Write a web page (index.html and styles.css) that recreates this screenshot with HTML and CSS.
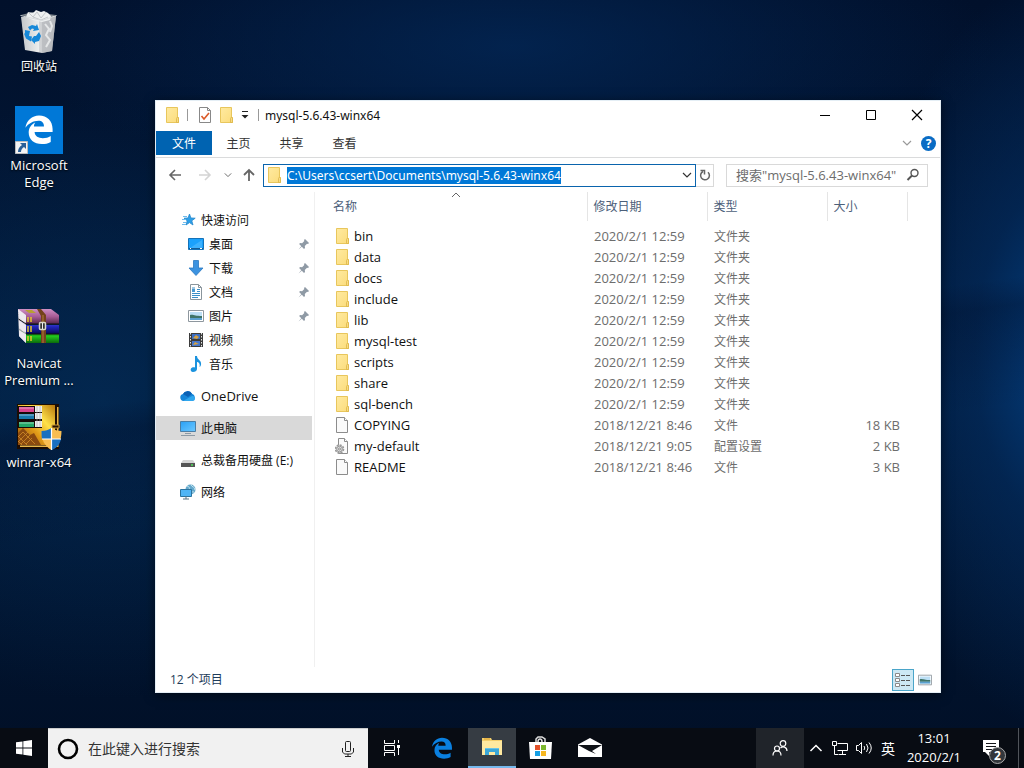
FILE: index.html
```html
<!DOCTYPE html>
<html lang="zh-CN">
<head>
<meta charset="utf-8">
<title>mysql-5.6.43-winx64</title>
<link rel="stylesheet" href="styles.css">
</head>
<body>
<svg class="defs" aria-hidden="true">
  <defs>
    <linearGradient id="g-folder" x1="0" y1="0" x2="1" y2="1"><stop offset="0" stop-color="#ffeaa0"/><stop offset="1" stop-color="#fbdc7c"/></linearGradient>
    <linearGradient id="g-screen" x1="0" y1="0" x2="1" y2="1"><stop offset="0" stop-color="#2aa0f5"/><stop offset="1" stop-color="#6cc8ff"/></linearGradient>
    <linearGradient id="g-gold" x1="0" y1="1" x2="1" y2="0"><stop offset="0" stop-color="#8a4a0c"/><stop offset=".4" stop-color="#e09a18"/><stop offset=".65" stop-color="#ffe24a"/><stop offset="1" stop-color="#b8780c"/></linearGradient>
    <linearGradient id="g-bin" x1="0" x2="1"><stop offset="0" stop-color="#c3c6c9"/><stop offset=".5" stop-color="#eceded"/><stop offset=".52" stop-color="#d4d6d8"/><stop offset="1" stop-color="#a9adb1"/></linearGradient>
    <linearGradient id="b-pink" x1="0" y1="0" x2="0" y2="1"><stop offset="0" stop-color="#cf8fc4"/><stop offset=".5" stop-color="#a85c96"/><stop offset="1" stop-color="#54254a"/></linearGradient>
    <linearGradient id="b-blue" x1="0" y1="0" x2="0" y2="1"><stop offset="0" stop-color="#5a62e8"/><stop offset=".5" stop-color="#2024b8"/><stop offset="1" stop-color="#0a0a50"/></linearGradient>
    <linearGradient id="b-green" x1="0" y1="0" x2="0" y2="1"><stop offset="0" stop-color="#0c5a0a"/><stop offset=".5" stop-color="#22c41c"/><stop offset="1" stop-color="#0c6a0c"/></linearGradient>
  </defs>
  <symbol id="folder" viewBox="0 0 16 16"><path d="M1.5.5h11v10h1v5h-12z" fill="url(#g-folder)" stroke="#e8c65c"/><path d="M11.5 15.5v-4l1-1.500 1 1v4.500z" fill="#f9dc83" stroke="#dcb548" stroke-width=".8"/></symbol>
  <symbol id="file" viewBox="0 0 16 16"><path d="M1.500.500h8l3 3v12h-11z" fill="#fafafa" stroke="#8c8c8c"/><path d="M9.500.500v3h3" fill="#fff" stroke="#8c8c8c"/></symbol>
  <symbol id="config" viewBox="0 0 16 16"><path d="M3.500.500h6l3 3v12h-9z" fill="#fafafa" stroke="#8c8c8c"/><path d="M9.500.500v3h3" fill="#fff" stroke="#8c8c8c"/><circle cx="4.500" cy="11" r="4" fill="#ddd" stroke="#999" stroke-width="1.600" stroke-dasharray="2 1.100"/><circle cx="4.500" cy="11" r="2.800" fill="#e0e0e0" stroke="#999"/><circle cx="4.500" cy="11" r="1" fill="#fff" stroke="#888"/></symbol>
  <symbol id="pin" viewBox="0 0 12 12"><path d="M7 1l4 4-1 1-1-.300-2.200 2.200.200 2-1 1L3.800 8.700.500 11.500l2.800-3.300L1.100 6l1-1 2 .200L6.300 3 6 2z" fill="#8f9aa5"/></symbol>
  <symbol id="edge" viewBox="0 0 32 32"><path d="M1.500 14.200C2.600 6.300 8.600 1 16 1c8.800 0 14.500 6 14.500 14.500v3.200H11.300c.2 4.700 4.200 6.500 8.700 6.500 3.300 0 6-.9 8.500-2.400v6.400C25.700 30.800 22.500 31.500 19 31.500 10.800 31.500 5 27 5 19.300c0-4.900 2.800-8.900 7-10.800-.9 1.200-1.300 2.700-1.400 4.200h10.700c0-3.900-2.200-6-5.900-6-5.500 0-10.600 2.900-13.900 7.500z" fill="currentColor"/></symbol>
  <symbol id="chev" viewBox="0 0 10 10"><path d="M1 3l4 4 4-4" fill="none" stroke="currentColor" stroke-width="1.200"/></symbol>
  <symbol id="picture" viewBox="0 0 16 16"><path d="M.500 2.500h15v11H.500z" fill="#fff" stroke="#8e979e"/><path d="M2 4h12v8H2z" fill="#bcdff5"/><path d="M2 7c3-1 5 1 12 1v2H2z" fill="#3f7468"/><path d="M2 10h12v2H2z" fill="#5aa0cf"/></symbol>
</svg>

<main class="desktop">
  <nav class="shortcuts" aria-label="桌面图标">
    <button class="shortcut">
      <svg class="shortcut-icon" viewBox="0 0 48 48">
        <path d="M6 10L41 9 37 44l-10 2L10 43z" fill="url(#g-bin)"/><path d="M27 14l14-5-4 35-10 2z" fill="#b9bcbf" opacity=".8"/>
        <path d="M6 8l12-3 23 3-13 5z" fill="#7d858c"/><path d="M11 10l2-5 5 1 3-3 5 2 3-1 4 2 3 3-1 4-8 2-9-2z" fill="#eef0f1"/><path d="M13 5l5 5 4-5 4 6 5-6M18 10l8 3 7-3" fill="none" stroke="#c3c7ca"/>
        <path d="M5.500 8.500L27 13.500l14.500-5" fill="none" stroke="#d8dbdd"/><path d="M30 17l4 5-3 6 4 5-4 7M35 14l2 5-2 6" fill="none" stroke="#e5e7e8" stroke-width="2"/>
        <g fill="#1688d8"><path d="M13 20l4-2 4 1 1-2 2 6-6 1 1-2-2-.500-2 2z"/><path d="M10 23l5 1-1 5 3 .500-1 5-5-3-2-5 1 0z"/><path d="M18 29l3 0 3-4 2 4-2 5-4 1v2l-4-4 3-4z"/></g>
      </svg>
      <span class="shortcut-label zh">回收站</span>
    </button>
    <button class="shortcut">
      <svg class="shortcut-icon" viewBox="0 0 48 48"><path d="M0 0h48v48H0z" fill="#0078d7"/><svg x="9" y="7" width="30" height="33" color="#fff"><use href="#edge"/></svg><path d="M.500 35.500h12v12H.500z" fill="#f4f4f4" stroke="#bbb"/><path d="M5 37h6v6L9 41c-2 1-3 3-3 5H3c0-3 1-5 4-7z" fill="#2a6098"/></svg>
      <span class="shortcut-label">Microsoft Edge</span>
    </button>
    <button class="shortcut shortcut-archive">
      <svg class="shortcut-icon" viewBox="0 0 48 48">
        <path d="M3 5l8 6v28l-7-7z" fill="#e8e4e6"/><path d="M3 8l8 5M3 10l8 5M3 16l8 6M4 19l7 5M4 25l7 5M4 28l7 5" stroke="#8c8894" stroke-width=".800"/>
        <path d="M3 5h33l8 6v9H11l-4-9z" fill="url(#b-pink)"/><path d="M4 16l7 5h33v9H11z" fill="url(#b-blue)"/><path d="M4 26l7 4h33v9H11z" fill="url(#b-green)"/>
        <path d="M3 5l8 6v8l-7-6zM4 16l7 5v8l-7-6zM4 26l7 4v9l-7-7z" fill="#eee9ef"/><path d="M11 20h33M11 30h33M3.500 15l7.500 5" stroke="#111" fill="none"/>
        <path d="M13 13v5M16 13v5M13 22v6M16 22v6M13 32v5M16 32v5" stroke="#e6c72c" stroke-width="1.500"/><path d="M10 6h7l4 3h-7z" fill="#b8a032"/>
        <path d="M22 5h4l5 6v28h-5V12z" fill="#74421c"/><path d="M28 11v28" stroke="#b57a3c"/><rect x="24.500" y="18.500" width="6" height="7" rx="1" fill="#333" stroke="#d8d8c8" stroke-width="1.500"/><path d="M27.500 19v6" stroke="#eee"/>
      </svg>
      <span class="shortcut-label">Navicat Premium ...</span>
    </button>
    <button class="shortcut shortcut-installer">
      <svg class="shortcut-icon" viewBox="0 0 48 48">
        <path d="M2 1h42v45H2z" fill="#1d0d02"/><path d="M42 4h1.500v40H5v-1.500h37z" fill="#e9b64a"/><path d="M3 2h37v40H3z" fill="url(#g-gold)"/>
        <path d="M3 30l5-5 7 7 4-2 7 12H3z" fill="#8a4a10"/><path d="M3 33l9 9M3 38l4 4M8 29l12 12M3 34l5-5M3 39l10-10M6 41l9-9M11 41l6-6" stroke="#d18b28" stroke-width=".800"/>
        <path d="M3 3h24v22H3z" fill="#160b08"/><path d="M4 4h15v5H4z" fill="#d8428c"/><path d="M4 11h15v5H4z" fill="#1878ac"/><path d="M4 19h15v5H4z" fill="#22a868"/><path d="M4 5h15M4 12h15M4 20h15" stroke="#fff" opacity=".5"/>
        <path d="M20 3h7v6h-7zM20 10h7v6h-7zM20 18h7v6h-7z" fill="#eee"/><path d="M22 3v21M25 3v21" stroke="#aaa" stroke-width=".600"/><path d="M37 22h7v3h-7z" fill="#241202" stroke="#c99a38"/>
        <path d="M36.500 25c3 2 6 3 10 3 0 9-3 15-10 19-7-4-10-10-10-19 4 0 7-1 10-3z" fill="#f8bd52"/><path d="M36.500 25v11H27c-.5-3-.5-5-.5-8 4 0 7-1 10-3zM36.500 36H46c-1 5-4 9-9.500 11z" fill="#1a70c0"/><path d="M36.500 25v22M27 36h19" stroke="#fff" stroke-width="1.200"/>
      </svg>
      <span class="shortcut-label">winrar-x64</span>
    </button>
  </nav>

  <section class="window" aria-label="mysql-5.6.43-winx64">
    <header class="titlebar">
      <svg class="i16"><use href="#folder"/></svg>
      <span class="tick"></span>
      <button class="quick" aria-label="属性"><svg class="i16" viewBox="0 0 16 16"><path d="M2.500.500h8l3 3v12h-11z" fill="#fff" stroke="#888"/><path d="M10.500.500v3h3" fill="none" stroke="#888"/><path d="M4.500 9l2.500 3 5-6" fill="none" stroke="#dc5a28" stroke-width="1.600"/></svg></button>
      <button class="quick" aria-label="新建文件夹"><svg class="i16"><use href="#folder"/></svg></button>
      <button class="quick quick-more" aria-label="自定义"><svg viewBox="0 0 8 8" width="8" height="8"><path d="M1 .500h6" stroke="#222"/><path d="M.500 4h7L4 7.500z" fill="#222"/></svg></button>
      <span class="tick"></span>
      <h1 class="title">mysql-5.6.43-winx64</h1>
      <div class="controls">
        <button class="control" aria-label="最小化"><svg viewBox="0 0 12 12" width="12" height="12"><path d="M1 6.500h10" stroke="#000"/></svg></button>
        <button class="control" aria-label="最大化"><svg viewBox="0 0 12 12" width="12" height="12"><path d="M1.500 1.500h9v9h-9z" fill="none" stroke="#000"/></svg></button>
        <button class="control" aria-label="关闭"><svg viewBox="0 0 12 12" width="12" height="12"><path d="M1 1l10 10M11 1L1 11" stroke="#000" stroke-width="1.200"/></svg></button>
      </div>
    </header>

    <div class="tabs zh">
      <button class="tab tab-file">文件</button><button class="tab">主页</button><button class="tab">共享</button><button class="tab">查看</button>
      <div class="tabs-end">
        <button class="quick muted" aria-label="展开功能区"><svg width="10" height="10"><use href="#chev"/></svg></button>
        <button class="help" aria-label="帮助">?</button>
      </div>
    </div>

    <div class="toolbar">
      <button class="nav-btn" aria-label="后退"><svg class="i14" viewBox="0 0 14 14"><path d="M13 7H2M7 2L2 7l5 5" fill="none" stroke="#666" stroke-width="1.600"/></svg></button>
      <button class="nav-btn" aria-label="前进"><svg class="i14" viewBox="0 0 14 14"><path d="M1 7h11M7 2l5 5-5 5" fill="none" stroke="#d4d4d4" stroke-width="1.600"/></svg></button>
      <button class="nav-btn nav-small" aria-label="最近位置"><svg width="8" height="8" color="#666"><use href="#chev"/></svg></button>
      <button class="nav-btn nav-up" aria-label="向上"><svg class="i14" viewBox="0 0 14 14"><path d="M7 13V2M2 7l5-5 5 5" fill="none" stroke="#666" stroke-width="1.800"/></svg></button>
      <div class="address">
        <svg class="i16"><use href="#folder"/></svg>
        <input class="path" type="text" size="36" value="C:\Users\ccsert\Documents\mysql-5.6.43-winx64" aria-label="地址">
        <button class="address-drop" aria-label="以前的位置"><svg width="10" height="10"><use href="#chev"/></svg></button>
      </div>
      <button class="refresh" aria-label="刷新"><svg viewBox="0 0 12 12" width="12" height="12"><path d="M4 2.500A4.400 4.400 0 1 0 9 3.200" fill="none" stroke="#666" stroke-width="1.500"/><path d="M1.500 1.500h4v4" fill="none" stroke="#666" stroke-width="1.500"/></svg></button>
      <label class="search">
        <input type="text" placeholder="搜索&quot;mysql-5.6.43-winx64&quot;" aria-label="搜索">
        <svg viewBox="0 0 14 14" width="14" height="14"><circle cx="8.500" cy="5" r="3.500" fill="none" stroke="#555" stroke-width="1.400"/><path d="M6 7.500L1.500 12" stroke="#555" stroke-width="2"/></svg>
      </label>
    </div>

    <div class="content">
      <nav class="tree zh" aria-label="导航窗格">
        <ul class="group">
          <li><a href="#" class="node"><svg class="i16" viewBox="0 0 16 16"><path d="M9.500 2l1.400 4 4.300.200-3.400 2.600 1.200 4.200-3.500-2.400L6 13l1.200-4.200L4 6.200 8 6z" fill="#2d9fe8" stroke="#2587cc" stroke-width=".800"/><path d="M3 4.500h4M2 7.500h4M3 10.500h3M2 12.500h4" stroke="#6fbced"/></svg>快速访问</a></li>
          <li><a href="#" class="node child"><svg class="i16" viewBox="0 0 16 16"><path d="M.500 2.500h15v11H.500z" fill="#1ba1fb" stroke="#1572b8"/><path d="M2 12l12-8v8z" fill="#55bcff" opacity=".6"/><path d="M1 12.500h14" stroke="#145b93"/><path d="M2 12.500h1M12 12.500h2" stroke="#fff"/></svg>桌面<svg class="pin"><use href="#pin"/></svg></a></li>
          <li><a href="#" class="node child"><svg class="i16" viewBox="0 0 16 16"><path d="M5.500.500h5V8h4.500L8 15.500 1 8h4.500z" fill="#3c93e0" stroke="#2b78c0" stroke-width=".800"/></svg>下载<svg class="pin"><use href="#pin"/></svg></a></li>
          <li><a href="#" class="node child"><svg class="i16" viewBox="0 0 16 16"><path d="M2.500.500h8l3 3v12h-11z" fill="#fff" stroke="#8a959c"/><path d="M10.500.500v3h3" fill="none" stroke="#8a959c"/><path d="M4 4h3M9 5.500h3M9 7.500h3M4 9.500h8M4 11.500h8M4 13.500h6" stroke="#3b8fc8"/><path d="M4 5h3v3H4z" fill="#4a9ad0"/></svg>文档<svg class="pin"><use href="#pin"/></svg></a></li>
          <li><a href="#" class="node child"><svg class="i16"><use href="#picture"/></svg>图片<svg class="pin"><use href="#pin"/></svg></a></li>
          <li><a href="#" class="node child"><svg class="i16" viewBox="0 0 16 16"><path d="M1 1h14v14H1z" fill="#3c3c3c"/><path d="M2.500 1v14M13.500 1v14" stroke="#e4e4e4" stroke-dasharray="1.500 1.500"/><path d="M4 2h8v5H4z" fill="#3c6fc4"/><path d="M4 9h8v5H4z" fill="#4679cf"/><path d="M5 6l3-3 3 2-2 2zM5 13l2-3 4 2z" fill="#d9a23e"/></svg>视频</a></li>
          <li><a href="#" class="node child"><svg class="i16" viewBox="0 0 16 16"><path d="M7 0h2c0 4 5 4 4 9-.5 1-1 2-1.500 2C12.500 7 10 6 9 6v7c0 2-2 3-4 3s-3-2-2-3.500S6 11 7 11.500z" fill="#1b93de"/></svg>音乐</a></li>
        </ul>
        <ul class="group"><li><a href="#" class="node latin"><svg class="i16" viewBox="0 0 16 16"><path d="M3.500 13a3.500 3.500 0 0 1-.500-6.900A5 5 0 0 1 12 5.800 3.800 3.800 0 0 1 12.500 13z" fill="#1585d8"/><path d="M3 6.100A5 5 0 0 1 12 5.800L8 9z" fill="#0b61b5"/><path d="M3 12.900L12 8c3-1 5 4.500 0 5z" fill="#30a7ee"/></svg>OneDrive</a></li></ul>
        <ul class="group"><li><a href="#" class="node selected" aria-current="page"><svg class="i16" viewBox="0 0 16 16"><path d="M.500 1.500h15v10H.500z" fill="url(#g-screen)" stroke="#4b7ea5"/><path d="M5 13.500h6M1 15.500h14" stroke="#8d9aa5"/></svg>此电脑</a></li></ul>
        <ul class="group"><li><a href="#" class="node"><svg class="i16" viewBox="0 0 16 16"><path d="M3 8h10l2 3H1z" fill="#d5d5d5"/><path d="M1 11h14v4H1z" fill="#555"/><path d="M11 13h2" stroke="#4fe05b" stroke-width="1.500"/></svg>总裁备用硬盘 (E:)</a></li></ul>
        <ul class="group"><li><a href="#" class="node"><svg class="i16" viewBox="0 0 16 16"><circle cx="10.500" cy="5.500" r="5" fill="#64a8cc"/><path d="M7 2c2 0 3 2 2 4M11 1c1 2 4 2 4 5M8 10c1-3 4-2 6-2" fill="none" stroke="#c5e5ee"/><path d="M.500 5.500h11v7H.500z" fill="#50b5f5" stroke="#2c749f"/><path d="M3 15h6M6 12v3" stroke="#5a7484"/></svg>网络</a></li></ul>
      </nav>

      <div class="files">
        <table>
          <colgroup><col><col class="c-date"><col class="c-type"><col class="c-size"><col class="c-rest"></colgroup>
          <thead class="zh"><tr><th class="sorted" aria-sort="ascending">名称<svg class="sort" viewBox="0 0 10 6" width="10" height="6"><path d="M1 5l4-4 4 4" fill="none" stroke="#666"/></svg></th><th>修改日期</th><th>类型</th><th>大小</th><td></td></tr></thead>
          <tbody>
            <tr><td><a href="#" class="entry"><svg class="i16"><use href="#folder"/></svg>bin</a></td><td>2020/2/1 12:59</td><td class="zh">文件夹</td><td></td><td></td></tr>
            <tr><td><a href="#" class="entry"><svg class="i16"><use href="#folder"/></svg>data</a></td><td>2020/2/1 12:59</td><td class="zh">文件夹</td><td></td><td></td></tr>
            <tr><td><a href="#" class="entry"><svg class="i16"><use href="#folder"/></svg>docs</a></td><td>2020/2/1 12:59</td><td class="zh">文件夹</td><td></td><td></td></tr>
            <tr><td><a href="#" class="entry"><svg class="i16"><use href="#folder"/></svg>include</a></td><td>2020/2/1 12:59</td><td class="zh">文件夹</td><td></td><td></td></tr>
            <tr><td><a href="#" class="entry"><svg class="i16"><use href="#folder"/></svg>lib</a></td><td>2020/2/1 12:59</td><td class="zh">文件夹</td><td></td><td></td></tr>
            <tr><td><a href="#" class="entry"><svg class="i16"><use href="#folder"/></svg>mysql-test</a></td><td>2020/2/1 12:59</td><td class="zh">文件夹</td><td></td><td></td></tr>
            <tr><td><a href="#" class="entry"><svg class="i16"><use href="#folder"/></svg>scripts</a></td><td>2020/2/1 12:59</td><td class="zh">文件夹</td><td></td><td></td></tr>
            <tr><td><a href="#" class="entry"><svg class="i16"><use href="#folder"/></svg>share</a></td><td>2020/2/1 12:59</td><td class="zh">文件夹</td><td></td><td></td></tr>
            <tr><td><a href="#" class="entry"><svg class="i16"><use href="#folder"/></svg>sql-bench</a></td><td>2020/2/1 12:59</td><td class="zh">文件夹</td><td></td><td></td></tr>
            <tr><td><a href="#" class="entry"><svg class="i16"><use href="#file"/></svg>COPYING</a></td><td>2018/12/21 8:46</td><td class="zh">文件</td><td class="size">18 KB</td><td></td></tr>
            <tr><td><a href="#" class="entry"><svg class="i16"><use href="#config"/></svg>my-default</a></td><td>2018/12/21 9:05</td><td class="zh">配置设置</td><td class="size">2 KB</td><td></td></tr>
            <tr><td><a href="#" class="entry"><svg class="i16"><use href="#file"/></svg>README</a></td><td>2018/12/21 8:46</td><td class="zh">文件</td><td class="size">3 KB</td><td></td></tr>
          </tbody>
        </table>
      </div>
    </div>

    <footer class="status zh">
      <span class="count">12 个项目</span>
      <div class="views">
        <button class="view active" aria-label="详细信息"><svg class="i16" viewBox="0 0 16 16"><path d="M.500 1.500h4v3h-4zM.500 6.500h4v3h-4zM.500 11.500h4v3h-4z" fill="#fff" stroke="#8a8a8a"/><path d="M6 3.500h10M6 8.500h10M6 13.500h10" stroke="#555" stroke-dasharray="4 1"/></svg></button>
        <button class="view" aria-label="大缩略图"><svg width="14" height="14"><use href="#picture"/></svg></button>
      </div>
    </footer>
  </section>
</main>

<footer class="taskbar">
  <button class="task" aria-label="开始"><svg class="i16" viewBox="0 0 16 16"><path d="M0 2.300L6.500 1.400V7.500H0zM7.300 1.300L16 0v7.500H7.300zM0 8.400h6.500v6.200L0 13.700zM7.300 8.400H16V16l-8.700-1.300z" fill="#fff"/></svg></button>
  <label class="cortana">
    <svg viewBox="0 0 22 22" width="22" height="22"><circle cx="11" cy="11" r="9" fill="none" stroke="#000" stroke-width="2.600"/></svg>
    <input type="text" placeholder="在此键入进行搜索" aria-label="在此键入进行搜索">
    <svg viewBox="0 0 12 16" width="12" height="16"><rect x="3.500" y=".500" width="5" height="10" rx="1" fill="none" stroke="#222"/><path d="M.500 7v4l2 2h7l2-2V7M6 13v3M3 15.500h6" fill="none" stroke="#222"/></svg>
  </label>
  <button class="task" aria-label="任务视图"><svg viewBox="0 0 18 16" width="18" height="16"><path d="M1.500 0v3.500h10V0M1.500 5.500h10v5h-10zM1.500 16v-3.500h10V16M15.500 0v3M15.500 8v7" fill="none" stroke="#fff"/><path d="M14 5h3v3h-3z" fill="#fff"/></svg></button>
  <button class="task task-edge" aria-label="Microsoft Edge"><svg width="22" height="22" color="#0a80e0"><use href="#edge"/></svg></button>
  <button class="task running" aria-label="文件资源管理器"><svg viewBox="0 0 22 20" width="22" height="20"><path d="M1 1h9l1 2h10v15H1z" fill="#f4cf6c"/><path d="M1 4h20v14H1z" fill="#ffe9a0"/><path d="M3 2h6" stroke="#db9d28"/><path d="M4 18v-7h14v7h-4v-3H8v3z" fill="#3ba7d8"/><path d="M4 11h14v1H4z" fill="#68c4e8"/></svg></button>
  <button class="task" aria-label="Microsoft Store"><svg viewBox="0 0 24 24" width="24" height="24"><path d="M8 6V3l2-2h4l3 2v3M10 6c0-4 4-4 4 0" fill="none" stroke="#ddd" stroke-width="1.500"/><path d="M1 6h23l-1 17H2z" fill="#fff"/><path d="M7 9h5v5H7z" fill="#e2512a"/><path d="M13 9h5v5h-5z" fill="#7cb82f"/><path d="M7 15h5v5H7z" fill="#159fe4"/><path d="M13 15h5v5h-5z" fill="#f7b720"/></svg></button>
  <button class="task task-mail" aria-label="邮件"><svg viewBox="0 0 24 20" width="24" height="20"><path d="M0 6.500L12 0l12 6.500V19H0z" fill="#fff"/><path d="M0 7h24l-10 6 4 3-7-3z" fill="#101318"/></svg></button>
  <div class="tray">
    <button class="task people" aria-label="人脉"><svg viewBox="0 0 16 16" width="16" height="16" fill="none" stroke="#fff" stroke-width="1.200"><circle cx="11" cy="3.500" r="2.800"/><circle cx="5" cy="8.500" r="2.500"/><path d="M1 15.500c0-6 8-6 8 0M8.500 8c2-2 6.500-1.500 6.500 3"/></svg></button>
    <button class="tray-btn" aria-label="显示隐藏的图标"><svg viewBox="0 0 14 14" width="14" height="14"><path d="M1.500 10L7 4.500l5.500 5.500" fill="none" stroke="#fff" stroke-width="1.500"/></svg></button>
    <button class="tray-btn" aria-label="网络"><svg viewBox="0 0 16 14" width="16" height="14" fill="none" stroke="#fff"><path d="M5.500 2.500h10v7h-10M10.500 10v3M7 13.500h7M.500.500h4v4h-4zM2.500 5v8.500h4"/></svg></button>
    <button class="tray-btn" aria-label="音量"><svg viewBox="0 0 18 14" width="18" height="14" fill="none" stroke="#fff"><path d="M1.500 4.500h2l3-3v11l-3-3h-2zM9 5q1.500 2 0 4M11.500 3q3 4 0 8M14 1.500q4.500 5.500 0 11"/></svg></button>
    <button class="tray-btn lang">英</button>
    <button class="clock"><span>13:01</span><span>2020/2/1</span></button>
    <button class="notices" aria-label="通知"><svg viewBox="0 0 16 16" width="16" height="16"><path d="M0 0h16v12H6v4l-4-4H0z" fill="#fff"/><path d="M3 3.500h10M3 6.500h10M3 9.500h6" stroke="#14161a"/></svg><span class="badge">2</span></button>
    <button class="show-desktop" aria-label="显示桌面"></button>
  </div>
</footer>
</body>
</html>
```
FILE: styles.css
```css
* { box-sizing: border-box; }

body {
  margin: 0;
  height: 100vh;
  display: flex;
  flex-direction: column;
  overflow: hidden;
  font: 13px/17px "Open Sans", "Noto Sans CJK SC", sans-serif;
  color: #111;
  background:
    linear-gradient(172deg, transparent 46%, rgba(1, 16, 44, .35) 49%, transparent 60%),
    radial-gradient(ellipse 200px 380px at 104% 46%, #043f80 0%, rgba(3, 46, 98, .6) 45%, transparent 100%),
    radial-gradient(ellipse 320px 300px at 10% 52%, rgba(3, 46, 90, .65), transparent 100%),
    radial-gradient(ellipse 480px 150px at 50% 6%, rgba(3, 39, 86, .8) 0%, transparent 100%),
    linear-gradient(#01102b, #021b3c 50%, #010f26);
}

button, input { font: inherit; color: inherit; border: 0; background: none; padding: 0; margin: 0; outline: 0; }
button { display: flex; align-items: center; justify-content: center; }
a { color: inherit; text-decoration: none; }
ul { list-style: none; margin: 0; padding: 0; }
svg { flex: none; display: block; }

.defs { position: absolute; width: 0; height: 0; }
.zh { font-size: 12px; }
.i14 { width: 14px; height: 14px; }
.i16 { width: 16px; height: 16px; }

/* Desktop */
.desktop { flex: 1; min-height: 0; position: relative; }
.shortcuts { display: grid; grid-template-columns: 78px; grid-auto-rows: 99px; padding-top: 7px; }
.shortcut { flex-direction: column; justify-content: flex-start; gap: 3px; color: #fff; text-shadow: 0 1px 2px #000; }
.shortcut-archive { grid-row: 4; }
.shortcut-installer { grid-row: 5; }
.shortcut-icon { width: 48px; height: 48px; }
.shortcut-label { max-width: 76px; line-height: 17px; }

/* Explorer window */
.window {
  position: absolute;
  inset: 100px 83px 35px 155px;
  display: flex;
  flex-direction: column;
  background: #fff;
  border: 1px solid #e4eef5;
  box-shadow: 0 2px 10px rgba(0, 0, 0, .5);
}
.titlebar { display: flex; align-items: center; height: 30px; padding: 0 0 2px 9px; }
.tick { width: 1px; height: 12px; background: #999; margin: 0 6px; }
.quick { min-width: 22px; height: 22px; }
.quick-more { min-width: 14px; }
.title, .path { font-family: "Noto Sans", "Noto Sans CJK SC", sans-serif; font-size: 12px; }
.title { flex: 1; margin: 0; font-weight: 400; }
.controls { display: flex; }
.control { width: 46px; height: 28px; }

.tabs { display: flex; align-items: center; height: 27px; padding-bottom: 2px; border-bottom: 1px solid #dadbdc; }
.tab { width: 53px; height: 24px; color: #333; }
.tab-file { width: 56px; background: #0063b1; color: #fff; }
.tabs-end { margin-left: auto; display: flex; align-items: center; gap: 3px; padding-right: 4px; }
.muted { color: #999; }
.help { width: 15px; height: 15px; border-radius: 50%; background: #0a6cc4; color: #fff; font-weight: 700; line-height: 15px; }

.toolbar { display: flex; align-items: center; height: 34px; padding: 0 12px 0 4px; }
.nav-btn { width: 30px; height: 22px; }
.nav-small { width: 16px; }
.nav-up { width: 27px; padding-right: 2px; }
.address { flex: 1; display: flex; align-items: center; height: 23px; padding-left: 3px; border: 1px solid #0a64ad; }
.path { field-sizing: content; min-width: 0; height: 17px; margin-left: 4px; background: #0078d7; color: #fff; }
.address-drop { margin-left: auto; width: 17px; height: 21px; color: #333; }
.refresh { width: 18px; height: 23px; border: 1px solid #d9d9d9; border-left: 0; }
.search { display: flex; align-items: center; width: 202px; height: 23px; margin-left: 12px; padding: 0 7px 0 9px; border: 1px solid #d9d9d9; }
.search input { flex: 1; min-width: 0; }
.search input::placeholder { color: #6d6d6d; opacity: 1; }

.content { flex: 1; min-height: 0; display: flex; }
.tree { width: 159px; padding: 16px 2px 0 0; border-right: 1px solid #f0f0f0; }
.group { margin-bottom: 8px; }
.node { display: flex; align-items: center; gap: 5px; height: 24px; padding-left: 24px; white-space: nowrap; }
.child { padding-left: 32px; }
.latin { font-size: 13px; }
.selected { background: #d9d9d9; }
.pin { width: 12px; height: 12px; margin: 0 2px 0 auto; }

.files { flex: 1; min-width: 0; }
table { width: 100%; table-layout: fixed; border-collapse: collapse; color: #6d6d6d; }
.c-date, .c-type { width: 120px; }
.c-size { width: 80px; }
.c-rest { width: 33px; }
th, td { padding: 0 0 0 7px; height: 21px; line-height: 17px; text-align: left; white-space: nowrap; }
th { height: 29px; padding-left: 6px; font-weight: 400; color: #4c607a; border-right: 1px solid #e5e5e5; }
.sorted { position: relative; padding-left: 18px; }
.sort { position: absolute; top: 0; left: 50%; }
tbody::before { content: ""; display: table-row; height: 5px; }
.entry { display: flex; align-items: center; gap: 3px; padding-left: 13px; color: #111; }
.entry svg { height: 18px; padding-bottom: 2px; }
.size { text-align: right; padding-right: 7px; }

.status { display: flex; align-items: center; height: 25px; color: #1e3c5a; }
.count { margin-left: 14px; padding-right: 12px; }
.views { margin-left: auto; display: flex; padding-right: 4px; }
.view { width: 22px; height: 22px; border: 1px solid transparent; }
.active { background: #cce8f4; border-color: #4aa5c9; }

/* Taskbar */
.taskbar { display: flex; height: 40px; background: #080c13; color: #fff; }
.task { position: relative; width: 48px; height: 40px; }
.task-edge { width: 52px; }
.task-mail { width: 52px; }
.cortana { width: 320px; display: flex; align-items: center; gap: 9px; padding: 0 14px 0 9px; background: #f1f1f1; color: #222; border-top: 1px solid #ccc; }
.cortana input { flex: 1; min-width: 0; font-size: 14px; }
.cortana input::placeholder { color: #333; opacity: 1; }
.running { background: #363c43; border-bottom: 2px solid #76b9ed; }
.tray { margin-left: auto; display: flex; }
.people { background: #20242a; }
.tray-btn { width: 24px; height: 40px; }
.lang { font-size: 14px; }
.clock { width: 68px; flex-direction: column; gap: 2px; }
.notices { position: relative; width: 50px; padding-right: 4px; }
.badge { position: absolute; right: 12px; bottom: 4px; width: 17px; height: 17px; border: 1px solid #aaa; border-radius: 50%; background: #33373c; font-size: 12px; font-weight: 700; line-height: 15px; text-align: center; }
.show-desktop { width: 6px; border-left: 1px solid #50545a; }
```
